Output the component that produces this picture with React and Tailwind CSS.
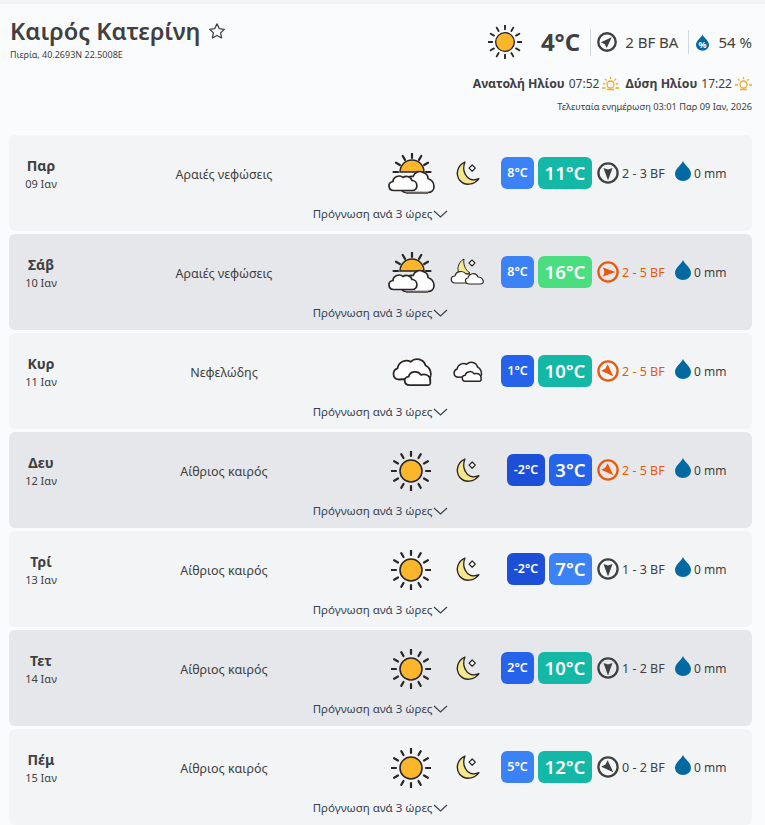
import React from "react";

const font = { fontFamily: '"Noto Sans", sans-serif' };
const ink = "#2b2626";

function Rays({ cx, cy, r1, r2, from = 0, to = 360, step = 30, width = 2.2 }) {
  const lines = [];
  for (let a = from; a < to; a += step) {
    const t = (a * Math.PI) / 180;
    lines.push(
      <line key={a} x1={cx + r1 * Math.cos(t)} y1={cy + r1 * Math.sin(t)} x2={cx + r2 * Math.cos(t)} y2={cy + r2 * Math.sin(t)} stroke={ink} strokeWidth={width} strokeLinecap="round" />
    );
  }
  return lines;
}

function SunIcon({ size = 40 }) {
  return (
    <svg width={size} height={size} viewBox="0 0 40 40">
      <Rays cx={20} cy={20} r1={15} r2={19.5} />
      <circle cx="20" cy="20" r="11" fill="#fbb62b" stroke={ink} strokeWidth="1.6" />
    </svg>
  );
}

function PartlyCloudy() {
  return (
    <svg width="48" height="42" viewBox="0 0 48 42">
      <Rays cx={25} cy={19} r1={14} r2={18.5} from={180} to={361} />
      <path d="M13 19a12 12 0 0 1 24 0z" fill="#fbb62b" stroke={ink} strokeWidth="1.5" />
      <path d="M19 39.500c-5 0-6-5-3-8 0-5 5-9 10-8 2-5 7-6 10-4 4 1 5 4 5 6 3 1 6 4 6 8 0 4-3 6-6 6z" fill="#fff" stroke={ink} strokeWidth="1.700" />
      <path d="M19 40h22" stroke="#6b6461" strokeWidth="2" />
      <path d="M7 37.500c-6 0-7-8-1-9 0-5 7-7 10-4 3-2 8-1 9 3 6 0 7 10 0 10z" fill="#fff" stroke={ink} strokeWidth="1.700" />
    </svg>
  );
}

function Cloudy({ small }) {
  const s = small ? 30 : 41;
  return (
    <svg width={s} height={s * 0.76} viewBox="0 0 44 33" className={small ? "" : "ml-[3px]"}>
      <path d="M7 25c-7-1-7-10-1-12 1-7 9-10 14-7 5-5 14-3 16 4 5 2 7 9 5 13z" fill="#fff" stroke={ink} strokeWidth={small ? 2.2 : 1.9} strokeLinejoin="round" />
      <path d="M19 31c-7 0-7-9-1-9 1-6 10-7 13-2 6-2 11 2 10 7 1 3-1 4-3 4z" fill="#fff" stroke={ink} strokeWidth={small ? 2.2 : 1.9} strokeLinejoin="round" />
    </svg>
  );
}

function MoonIcon() {
  return (
    <svg width="25" height="25" viewBox="0 0 24 24" className="mt-[1px] mr-[1px]">
      <path d="M9.500 1C2.500 4 0 12.500 4.500 18.500c4.500 5.500 14 5 18.500-1.500-6 2.500-11 .5-13-4C8 9.500 8 5 9.500 1z" fill="#f5e88c" stroke={ink} strokeWidth="1.300" strokeLinejoin="round" />
      <path d="M16.500 3.800l3 3-3 3-3-3z" fill="#fff" stroke={ink} strokeWidth="1.200" strokeLinejoin="round" />
    </svg>
  );
}

function MoonCloud() {
  return (
    <svg width="36" height="30" viewBox="0 0 36 30">
      <path d="M14 2C8 5 6 13 10 18l10-2C15 13 13 7 14 2z" fill="#f5e88c" stroke={ink} strokeWidth="1" strokeLinejoin="round" />
      <path d="M22 3l3 3-3 3-3-3z" fill="#fff" stroke={ink} strokeWidth="1.100" strokeLinejoin="round" />
      <path d="M5 26c-5 0-5-7 0-7 1-5 8-6 11-2 4-1 7 2 6 6l2 3z" fill="#fff" stroke={ink} strokeWidth="1.200" strokeLinejoin="round" />
      <path d="M19 27c-4 0-5-6-1-6 1-5 8-6 10-1 5 0 8 7 2 7z" fill="#fff" stroke={ink} strokeWidth="1.200" strokeLinejoin="round" />
    </svg>
  );
}

function WindIcon({ rotate = 0, color = "#404040", size = 22, stroke = 2.3 }) {
  // arrow drawn pointing up, then turned
  return (
    <svg width={size} height={size} viewBox="0 0 22 22">
      <circle cx="11" cy="11" r="9.600" fill="none" stroke={color} strokeWidth={stroke} />
      <path d="M11 3.500L15.500 16L11 14.500L6.500 16z" fill={color} transform={`rotate(${rotate} 11 11)`} />
    </svg>
  );
}

function Drop({ size = 16 }) {
  return (
    <svg width={size} height={size * 1.25} viewBox="0 0 16 20">
      <path d="M8 0C6.500 4 0 7.500 0 13a8 7 0 0 0 16 0C16 7.500 9.500 4 8 0z" fill="#0369a1" />
    </svg>
  );
}

function Chevron() {
  return (
    <svg width="15" height="8" viewBox="0 0 15 8" fill="none" stroke="#374151" strokeWidth="1.200">
      <path d="M1 1l6.500 6L14 1" />
    </svg>
  );
}

const days = [
  { day: "Παρ", date: "09 Ιαν", desc: "Αραιές νεφώσεις", icon: <PartlyCloudy />, night: <MoonIcon />, low: "8°C", lowBg: "bg-[#3b82f6]", high: "11°C", highBg: "bg-[#14b8a6]", rot: 180, wind: "2 - 3 BF", bg: "bg-[#f3f4f6]" },
  { day: "Σάβ", date: "10 Ιαν", desc: "Αραιές νεφώσεις", icon: <PartlyCloudy />, night: <MoonCloud />, low: "8°C", lowBg: "bg-[#3b82f6]", high: "16°C", highBg: "bg-[#4ade80]", rot: 90, wind: "2 - 5 BF", hot: true, bg: "bg-[#e5e7eb]" },
  { day: "Κυρ", date: "11 Ιαν", desc: "Νεφελώδης", icon: <Cloudy />, night: <Cloudy small />, low: "1°C", lowBg: "bg-[#2563eb]", high: "10°C", highBg: "bg-[#14b8a6]", rot: 135, wind: "2 - 5 BF", hot: true, bg: "bg-[#f3f4f6]" },
  { day: "Δευ", date: "12 Ιαν", desc: "Αίθριος καιρός", icon: <SunIcon />, night: <MoonIcon />, low: "-2°C", lowBg: "bg-[#1d4ed8]", high: "3°C", highBg: "bg-[#2563eb]", rot: 135, wind: "2 - 5 BF", hot: true, wide: true, bg: "bg-[#e5e7eb]" },
  { day: "Τρί", date: "13 Ιαν", desc: "Αίθριος καιρός", icon: <SunIcon />, night: <MoonIcon />, low: "-2°C", lowBg: "bg-[#1d4ed8]", high: "7°C", highBg: "bg-[#3b82f6]", rot: 180, wind: "1 - 3 BF", wide: true, bg: "bg-[#f3f4f6]" },
  { day: "Τετ", date: "14 Ιαν", desc: "Αίθριος καιρός", icon: <SunIcon />, night: <MoonIcon />, low: "2°C", lowBg: "bg-[#2563eb]", high: "10°C", highBg: "bg-[#14b8a6]", rot: 180, wind: "1 - 2 BF", bg: "bg-[#e5e7eb]" },
  { day: "Πέμ", date: "15 Ιαν", desc: "Αίθριος καιρός", icon: <SunIcon />, night: <MoonIcon />, low: "5°C", lowBg: "bg-[#3b82f6]", high: "12°C", highBg: "bg-[#14b8a6]", rot: 135, wind: "0 - 2 BF", bg: "bg-[#f3f4f6]" },
];

function DayRow({ d }) {
  return (
    <div className={`${d.bg} rounded-md h-[96px] flex flex-col`}>
      <div className="flex items-center h-[74px] pt-[2px]">
        <div className="w-[64px] flex flex-col items-center">
          <span className="text-[14px] font-bold leading-[20px] text-neutral-700">{d.day}</span>
          <span className="text-[11px] leading-[15px] text-neutral-700">{d.date}</span>
        </div>
        <div className="w-[302px] text-center text-[12.5px] text-neutral-700 pt-[5px]">{d.desc}</div>
        <div className="w-[72px] flex justify-center pt-[1px]">{d.icon}</div>
        <div className="w-[42px] flex justify-center">{d.night}</div>
        <div className="w-[103px] flex justify-end gap-1 text-white font-semibold">
          <div className={`${d.lowBg} ${d.wide ? "w-[38px]" : "w-[33px]"} h-[32px] rounded-md flex items-center justify-center text-[12.5px]`}>{d.low}</div>
          <div className={`${d.highBg} ${d.wide ? "w-[43px]" : "w-[54px]"} h-[32px] rounded-md flex items-center justify-center text-[18.5px]`}>{d.high}</div>
        </div>
        <div className="ml-[5px] w-[22px]">
          <WindIcon rotate={d.rot} color={d.hot ? "#ea580c" : "#404040"} />
        </div>
        <div className={`ml-[3px] w-[53px] text-[12.5px] pt-[2px] ${d.hot ? "text-[#ea580c]" : "text-neutral-700"}`}>{d.wind}</div>
        <div className="mb-[5px]"><Drop /></div>
        <div className="ml-[3px] text-[12px] text-neutral-700 pt-[2px]">0 mm</div>
      </div>
      <div className="flex items-center justify-center gap-[1px] text-[11.5px] text-gray-700 mt-[-4px]">
        <span>Πρόγνωση ανά 3 ώρες</span>
        <Chevron />
      </div>
    </div>
  );
}

export default function App() {
  return (
    <div style={font} className="min-h-[825px] bg-[#fafbfd] border-t-4 border-gray-100 text-neutral-700 overflow-hidden">
      <div className="flex justify-between pl-[10px] pr-[13px] h-[131px]">
        <div className="pt-[10px]">
          <div className="flex items-center gap-2">
            <h1 className="text-[23.6px] font-semibold leading-[34px]">Καιρός Κατερίνη</h1>
            <svg width="18" height="18" viewBox="0 0 24 24" fill="none" stroke="#404040" strokeWidth="1.700" strokeLinejoin="round">
              <path d="M12 2.500l3 6.300 6.800.9-5 4.800 1.300 6.800-6.100-3.300-6.100 3.300 1.300-6.800-5-4.800 6.800-.9z" />
            </svg>
          </div>
          <div className="text-[9px] leading-[12px] mt-[1px]">Πιερία, 40.2693N 22.5008E</div>
        </div>
        <div className="flex flex-col items-end pt-[20px]">
          <div className="flex items-center h-[36px]">
            <SunIcon size={34} />
            <span className="ml-[19px] text-[24px] font-bold">4°C</span>
            <div className="ml-[10px] w-px h-[27px] bg-gray-300" />
            <div className="ml-[6px]"><WindIcon rotate={45} size={20} stroke={2.6} /></div>
            <span className="ml-[8px] text-[15px]">2 BF BA</span>
            <div className="ml-[10px] w-px h-[24px] bg-gray-300" />
            <svg className="ml-[7px]" width="13" height="17" viewBox="0 0 16 20">
              <path d="M8 0C6.500 4 0 7.500 0 13a8 7 0 0 0 16 0C16 7.500 9.500 4 8 0z" fill="#0369a1" />
              <text x="8" y="16.500" textAnchor="middle" fontSize="11" fontWeight="700" fill="#fff">%</text>
            </svg>
            <span className="ml-[9px] text-[15px]">54 %</span>
          </div>
          <div className="flex items-center text-[12px] mt-[15px] h-[18px]">
            <span className="font-bold text-[12.3px]">Ανατολή Ηλίου</span>
            <span className="ml-1">07:52</span>
            <svg className="ml-[3px]" width="17" height="14" viewBox="0 0 17 14" fill="none" stroke="#f5a623" strokeWidth="1.300">
              <circle cx="8.500" cy="7.500" r="3.500" />
              <path d="M0 11h3.500M13.500 11H17M8.500 0v2M3 2l1.500 1.500M14 2l-1.500 1.500M1 6.500l2 .5M16 6.500l-2 .5M5 12.500h7" />
            </svg>
            <span className="ml-[6px] font-bold text-[12.3px]">Δύση Ηλίου</span>
            <span className="ml-1">17:22</span>
            <svg className="ml-[3px]" width="17" height="14" viewBox="0 0 17 14" fill="none" stroke="#f5a623" strokeWidth="1.300">
              <circle cx="8.500" cy="7.500" r="3.500" />
              <path d="M0 8h3M14 8h3M8.500 0v2M3 2l1.500 1.500M14 2l-1.500 1.500M5 12.500h7" />
            </svg>
          </div>
          <div className="text-[9.25px] leading-[13px] mt-[7px]">Τελευταία ενημέρωση 03:01 Παρ 09 Ιαν, 2026</div>
        </div>
      </div>
      <div className="mx-[9px] w-[743px] flex flex-col gap-[3px]">
        {days.map((d) => <DayRow key={d.day} d={d} />)}
      </div>
    </div>
  );
}
